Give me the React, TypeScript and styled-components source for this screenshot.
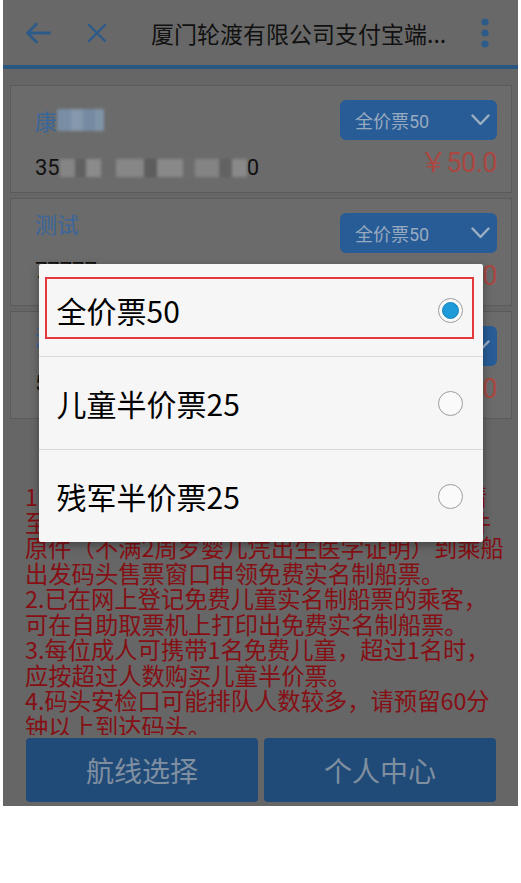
import styled, { createGlobalStyle } from 'styled-components';

const GlobalStyle = createGlobalStyle`
  html, body {
    margin: 0;
    padding: 0;
    background: #ffffff;
  }
  body {
    font-family: Roboto, "Noto Sans CJK SC", sans-serif;
  }
`;

const Frame = styled.div`
  margin-left: 3px;
  width: 515px;
  height: 806px;
  position: relative;
  overflow: hidden;
  background: #6a6a6a;
  display: flex;
  flex-direction: column;
`;

const Header = styled.div`
  flex: 0 0 auto;
  height: 65px;
  border-bottom: 4px solid #2b5a86;
  background: #6c6c6c;
  display: flex;
  align-items: center;
`;

const IconSlot = styled.span<{ $gap: number }>`
  display: flex;
  align-items: center;
  margin-left: ${p => p.$gap}px;
`;

const Title = styled.div`
  flex: 1;
  margin-left: 44px;
  font-size: 23px;
  color: #121212;
  white-space: nowrap;
  font-family: "Noto Sans CJK SC", sans-serif;
`;

const Content = styled.div`
  flex: 1;
  overflow: hidden;
  padding: 16px 6px 0 7px;
  display: flex;
  flex-direction: column;
  gap: 5px;
`;

const Card = styled.div`
  height: 108px;
  box-sizing: border-box;
  border: 1px solid #5d5d5d;
  background: #6f6f6f;
  display: flex;
  justify-content: space-between;
  padding: 0 14px 0 24px;
  flex: 0 0 auto;
`;

const Who = styled.div<{ $first?: boolean }>`
  display: flex;
  flex-direction: column;
  padding-top: ${p => (p.$first ? 22 : 12)}px;
`;

const Name = styled.div`
  font-size: 22px;
  line-height: 24px;
  height: 24px;
  color: #3b6aa0;
  display: flex;
  align-items: center;
  font-family: "Noto Sans CJK SC", sans-serif;
`;

const IdNumber = styled.div`
  margin-top: 24px;
  font-size: 22px;
  line-height: 24px;
  color: #111111;
  display: flex;
  align-items: center;
`;

const Mask = styled.span<{ $w: number; $h: number; $blue?: boolean }>`
  display: inline-block;
  width: ${p => p.$w}px;
  height: ${p => p.$h}px;
  filter: blur(1.6px);
  background: ${p =>
    p.$blue
      ? 'linear-gradient(90deg, #7d93ab 0 30%, #8a9db2 30% 55%, #7890a8 55% 80%, #8599ae 80%)'
      : 'linear-gradient(90deg, #8a8a8a 0 8%, #646464 8% 14%, #909090 14% 22%, #6e6e6e 22% 30%, #8c8c8c 30% 45%, #606060 45% 52%, #8e8e8e 52% 66%, #707070 66% 72%, #898989 72% 85%, #666666 85% 92%, #8e8e8e 92%)'};
`;

const Fare = styled.div`
  display: flex;
  flex-direction: column;
  align-items: flex-end;
  padding-top: 14px;
`;

const SelectBox = styled.div`
  width: 157px;
  height: 40px;
  box-sizing: border-box;
  border-radius: 6px;
  background: #2a5f9c;
  color: #9db0c6;
  font-size: 18px;
  padding: 0 7px 0 15px;
  display: flex;
  align-items: center;
  justify-content: space-between;
`;

const Price = styled.div`
  margin-top: 8px;
  font-size: 27px;
  line-height: 30px;
  color: #b04a44;
  letter-spacing: -0.5px;
`;

const Notice = styled.div`
  margin: 60px 0 0 15px;
  color: #8a1015;
  font-size: 23.3px;
  line-height: 25.5px;
  font-family: "Noto Sans CJK SC", sans-serif;
`;

const NoticeLine = styled.span`
  display: block;
  white-space: nowrap;
`;

const Footer = styled.div`
  flex: 0 0 auto;
  height: 71px;
  box-sizing: border-box;
  padding: 3px 22px 4px 23px;
  display: flex;
  gap: 6px;
  background: #6a6a6a;
`;

const FooterButton = styled.button`
  flex: 1;
  border: none;
  border-radius: 4px;
  background: #224e7c;
  color: #8494a6;
  font-size: 28px;
  font-family: "Noto Sans CJK SC", sans-serif;
`;

const Scrim = styled.div`
  position: absolute;
  inset: 0;
  background: rgba(0, 0, 0, 0.03);
  display: flex;
  align-items: center;
  justify-content: center;
`;

const Dialog = styled.div`
  width: 444px;
  background: #f6f6f6;
  border-radius: 2px;
  box-shadow: 0 3px 10px rgba(0, 0, 0, 0.35);
`;

const Option = styled.div`
  position: relative;
  height: 92px;
  display: flex;
  align-items: center;
  justify-content: space-between;
  padding: 0 20px 0 18px;
  font-size: 30px;
  color: #000000;
  font-family: "Noto Sans CJK SC", sans-serif;
  & + & {
    border-top: 1px solid #d9d9d9;
  }
`;

const Radio = styled.span<{ $on?: boolean }>`
  width: 25px;
  height: 25px;
  box-sizing: border-box;
  border-radius: 50%;
  border: 1.5px solid #9c9c9c;
  background: #fafafa;
  display: grid;
  place-items: center;
  &::after {
    content: '';
    display: ${p => (p.$on ? 'block' : 'none')};
    width: 17px;
    height: 17px;
    box-sizing: border-box;
    border-radius: 50%;
    background: #1c9bd8;
    border: 1px solid #1783b8;
  }
`;

const Highlight = styled.div`
  position: absolute;
  top: 13px;
  left: 6px;
  right: 9px;
  bottom: 17px;
  border: 2.5px solid #e5383b;
  pointer-events: none;
`;

const BackIcon = () => (
  <svg width="26" height="22" viewBox="0 0 26 22" fill="none" stroke="#2f5e8e" strokeWidth="2.8" strokeLinecap="round" strokeLinejoin="round">
    <path d="M2.5 11 H24.5 M11.5 2 L2.5 11 L11.5 20" />
  </svg>
);

const CloseIcon = () => (
  <svg width="20" height="20" viewBox="0 0 20 20" fill="none" stroke="#2f5e8e" strokeWidth="2.4" strokeLinecap="round">
    <path d="M2 2 L18 18 M18 2 L2 18" />
  </svg>
);

const MoreIcon = () => (
  <svg width="8" height="30" viewBox="0 0 8 30" fill="#2f5e8e">
    <circle cx="4" cy="4" r="3.6" />
    <circle cx="4" cy="15" r="3.6" />
    <circle cx="4" cy="26" r="3.6" />
  </svg>
);

const Chevron = () => (
  <svg width="19" height="12" viewBox="0 0 19 12" fill="none" stroke="#a3b5c9" strokeWidth="2.4" strokeLinecap="round" strokeLinejoin="round">
    <path d="M1.5 1.5 L9.5 10 L17.5 1.5" />
  </svg>
);

const passengers = [
  { name: '康', masked: true, id: '35', first: true },
  { name: '测试', masked: false, id: '77777', first: false },
  { name: '测试', masked: false, id: '55555', first: false },
];

const notes = [
  '1.免费儿童乘船须由成人陪同，于乘船当日请',
  '至码头售票窗口出示儿童的户口簿或身份证件',
  '原件（不满2周岁婴儿凭出生医学证明）到乘船',
  '出发码头售票窗口申领免费实名制船票。',
  '2.已在网上登记免费儿童实名制船票的乘客，',
  '可在自助取票机上打印出免费实名制船票。',
  '3.每位成人可携带1名免费儿童，超过1名时，',
  '应按超过人数购买儿童半价票。',
  '4.码头安检口可能排队人数较多，请预留60分',
  '钟以上到达码头。',
];

const ticketTypes = ['全价票50', '儿童半价票25', '残军半价票25'];

const App = () => {
  return <>
    <GlobalStyle />
    <Frame>
      <Header>
        <IconSlot $gap={22}><BackIcon /></IconSlot>
        <IconSlot $gap={36}><CloseIcon /></IconSlot>
        <Title>厦门轮渡有限公司支付宝端...</Title>
        <IconSlot $gap={0} style={{ marginRight: 29 }}><MoreIcon /></IconSlot>
      </Header>
      <Content>
        {passengers.map((p, i) => (
          <Card key={i}>
            <Who $first={p.first}>
              <Name>{p.name}{p.masked && <Mask $w={47} $h={22} $blue />}</Name>
              <IdNumber>
                {p.id}
                {p.masked && <><Mask $w={187} $h={18} />0</>}
              </IdNumber>
            </Who>
            <Fare>
              <SelectBox>全价票50<Chevron /></SelectBox>
              <Price>￥50.0</Price>
            </Fare>
          </Card>
        ))}
        <Notice>
          {notes.map((line, i) => <NoticeLine key={i}>{line}</NoticeLine>)}
        </Notice>
      </Content>
      <Footer>
        <FooterButton>航线选择</FooterButton>
        <FooterButton>个人中心</FooterButton>
      </Footer>
      <Scrim>
        <Dialog>
          {ticketTypes.map((t, i) => (
            <Option key={t}>
              {t}
              <Radio $on={i === 0} />
              {i === 0 && <Highlight />}
            </Option>
          ))}
        </Dialog>
      </Scrim>
    </Frame>
  </>;
};

export default App;
